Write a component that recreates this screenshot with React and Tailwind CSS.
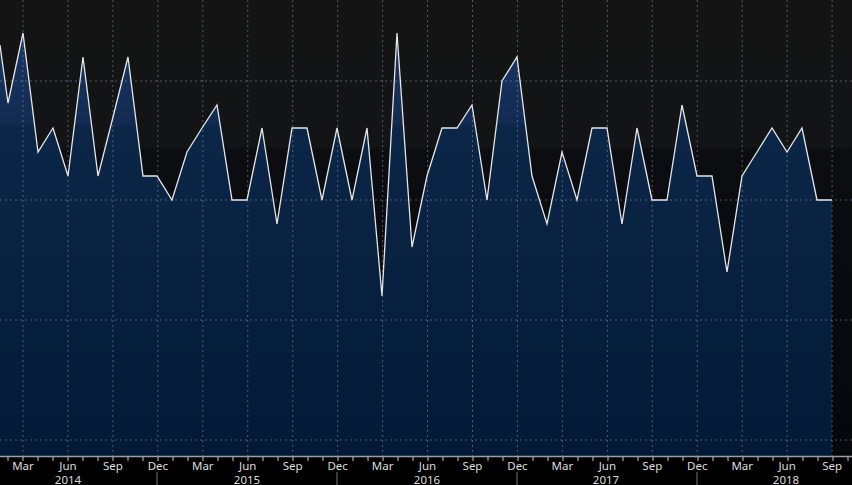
const PTS = [
  [0, 45], [8, 103], [23, 33], [38, 152], [53, 128], [68, 176], [83, 57], [98, 176], [113, 117], [128, 57],
  [143, 176], [157, 176], [172, 200], [187, 152], [202, 128], [217, 105], [232, 200], [247, 200], [262, 128],
  [277, 224], [292, 128], [307, 128], [322, 200], [337, 128], [352, 200], [367, 128], [382, 296], [397, 33],
  [412, 247], [427, 176], [442, 128], [457, 128], [472, 105], [487, 200], [502, 81], [517, 57], [532, 176],
  [547, 224], [562, 152], [577, 200], [592, 128], [607, 128], [622, 224], [637, 128], [652, 200], [667, 200],
  [682, 105], [697, 176], [712, 176], [727, 272], [742, 176], [757, 152], [772, 128], [787, 152], [802, 128],
  [817, 200], [832, 200],
]

const MONTHS = ["Mar", "Jun", "Sep", "Dec"]
const YEARS = [
  { x: 68, label: "2014" },
  { x: 247, label: "2015" },
  { x: 427, label: "2016" },
  { x: 606, label: "2017" },
  { x: 786, label: "2018" },
]

export default function App() {
  const line = PTS.map(([x, y]) => `${x},${y}`).join(" ")
  const area = `0,456 ${line} 832,456`
  const gridX = Array.from({ length: 19 }, (_, i) => 23 + i * 44.95)
  const ticks = Array.from({ length: 57 }, (_, i) => 8 + i * 15)

  return (
    <div className="h-[485px] w-[852px] overflow-hidden bg-black font-['Liberation_Sans',Arial,sans-serif]">
      <svg width="852" height="485" viewBox="0 0 852 485">
        <defs>
          <linearGradient id="bg" x1="0" y1="0" x2="0" y2="1">
            <stop offset="0" stopColor="#141414" />
            <stop offset="0.32" stopColor="#131416" />
            <stop offset="0.33" stopColor="#0b0d11" />
            <stop offset="1" stopColor="#05070a" />
          </linearGradient>
          <linearGradient id="fill" x1="0" y1="0" x2="0" y2="456" gradientUnits="userSpaceOnUse">
            <stop offset="0" stopColor="#1b3a6a" />
            <stop offset="0.27" stopColor="#132b52" />
            <stop offset="0.28" stopColor="#0c2648" />
            <stop offset="1" stopColor="#021a36" />
          </linearGradient>
        </defs>
        <rect x="0" y="0" width="852" height="456" fill="url(#bg)" />
        <polygon points={area} fill="url(#fill)" />
        {[81, 200, 320, 440].map((y) => (
          <line key={y} x1="0" x2="852" y1={y} y2={y} stroke="#8a96a8" strokeOpacity="0.55" strokeDasharray="2 3" strokeWidth="1" />
        ))}
        {gridX.map((x) => (
          <line key={x} x1={x} x2={x} y1="0" y2="456" stroke="#8a96a8" strokeOpacity="0.55" strokeDasharray="2 3" strokeWidth="1" />
        ))}
        <polyline points={line} fill="none" stroke="#e6e6e6" strokeWidth="1.3" strokeLinejoin="miter" />
        <line x1="0" x2="852" y1="456.5" y2="456.5" stroke="#9aa0a8" strokeWidth="1.5" />
        {ticks.map((x) => (
          <line key={x} x1={x} x2={x} y1="457" y2="461" stroke="#c8c8c8" strokeWidth="1" />
        ))}
        {[157, 337, 517, 697].map((x) => (
          <line key={x} x1={x} x2={x} y1="472" y2="485" stroke="#777" strokeWidth="1" />
        ))}
        {gridX.map((x, i) => (
          <text key={i} x={x} y="470" fill="#dcdcdc" fontSize="11.5" textAnchor="middle">
            {MONTHS[i % 4]}
          </text>
        ))}
        {YEARS.map((y) => (
          <text key={y.label} x={y.x} y="484" fill="#dcdcdc" fontSize="11.5" textAnchor="middle">
            {y.label}
          </text>
        ))}
      </svg>
    </div>
  )
}
